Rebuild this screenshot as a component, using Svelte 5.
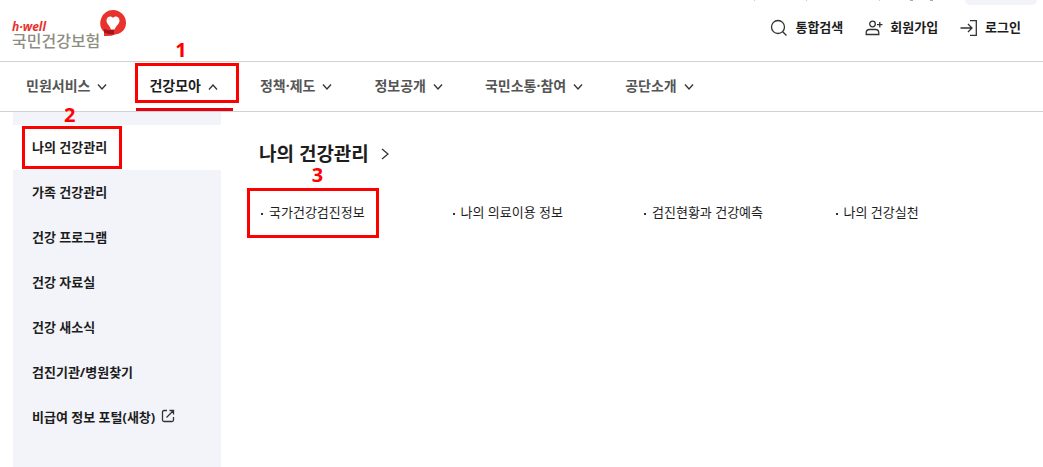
<script>
  const menus = [
    { name: '민원서비스' },
    { name: '건강모아', open: true, mark: '1' },
    { name: '정책·제도' },
    { name: '정보공개' },
    { name: '국민소통·참여' },
    { name: '공단소개' }
  ];
  const sections = [
    { name: '나의 건강관리', current: true, mark: '2' },
    { name: '가족 건강관리' },
    { name: '건강 프로그램' },
    { name: '건강 자료실' },
    { name: '건강 새소식' },
    { name: '검진기관/병원찾기' },
    { name: '비급여 정보 포털(새창)', external: true }
  ];
  const pages = [
    { name: '국가건강검진정보', mark: '3' },
    { name: '나의 의료이용 정보' },
    { name: '검진현황과 건강예측' },
    { name: '나의 건강실천' }
  ];
</script>

<header>
  <div class="utility">
    <span class="cell short"></span><span class="cell"></span><span class="cell long"></span>
    <span class="pill"></span>
  </div>
  <div class="brand-row">
    <a class="logo" href="#home">
      <span class="words"><em>h·well</em><span>국민건강보험</span></span>
      <svg width="28" height="28" viewBox="0 0 28 28" aria-hidden="true">
        <path fill="#e8322d" d="M14 1A13 13 0 0 1 27 14C27 20 23 24.500 16 25.500Q12 27.500 5 27V23A13 13 0 0 1 14 1Z" />
        <path fill="#a5141c" d="M5 20Q9 22 15 20.500V25.500Q10 26 5 23.500Z" />
        <path fill="#fff" d="M14 9C15.500 6.500 20.500 7 20.500 11.500C20.500 15 17.500 16 15.500 20.500H12C10.500 16 7.500 15 7.500 11.500C7.500 7 12.500 6.500 14 9Z" />
      </svg>
    </a>
    <div class="tools">
      <a href="#search">
        <svg width="18" height="18" viewBox="0 0 18 18"><circle cx="8" cy="8" r="6.500" /><path d="M12.700 12.700L16.500 16.500" /></svg>
        통합검색
      </a>
      <a href="#join">
        <svg width="18" height="18" viewBox="0 0 18 18"><circle cx="7.500" cy="5" r="2.800" /><path d="M1.200 15.500V14Q1.200 10.500 4.500 10.500H10.500Q13.800 10.500 13.800 14V15.500ZM14.800 3V8.500M12 5.700H17.500" /></svg>
        회원가입
      </a>
      <a href="#login">
        <svg width="18" height="18" viewBox="0 0 18 18"><path d="M10 1.700H16.300V16.300H10M0.500 9H12M8 5L12 9L8 13" /></svg>
        로그인
      </a>
    </div>
  </div>
  <nav class="main-nav">
    {#each menus as menu}
      <button class:open={menu.open} aria-expanded={!!menu.open}>
        {menu.name}
        <svg width="10" height="8" viewBox="0 0 10 8"><path d={menu.open ? 'M1 6.500L5 2L9 6.500' : 'M1 1.500L5 6L9 1.500'} /></svg>
        {#if menu.mark}<span class="mark"><b>{menu.mark}</b></span>{/if}
      </button>
    {/each}
  </nav>
</header>

<main>
  <aside>
    {#each sections as section}
      <a href="#section" class:current={section.current}>
        {section.name}
        {#if section.external}
          <svg width="14" height="14" viewBox="0 0 14 14"><path d="M6 1.500H3Q1.500 1.500 1.500 3V11Q1.500 12.500 3 12.500H11Q12.500 12.500 12.500 11V8M5.500 8.500L12.500 1.500M8.500 1.500H12.500V5.500" /></svg>
        {/if}
        {#if section.mark}<span class="mark"><b>{section.mark}</b></span>{/if}
      </a>
    {/each}
  </aside>
  <section>
    <h1><a href="#my-health">나의 건강관리
      <svg width="8" height="12" viewBox="0 0 8 12"><path d="M1 1L7 6L1 11" /></svg></a></h1>
    <ul>
      {#each pages as page}
        <li>
          <a href="#page">{page.name}{#if page.mark}<span class="mark"><b>{page.mark}</b></span>{/if}</a>
        </li>
      {/each}
    </ul>
  </section>
</main>

<style>
  :global(body) { background: #fff; }
  header, main { font-family: 'Noto Sans', 'Noto Sans CJK KR', sans-serif; color: #1d1d1d; }
  a { color: inherit; text-decoration: none; }
  svg { fill: none; stroke: #333; stroke-width: 1.3; flex: none; }
  .utility { display: flex; justify-content: flex-end; height: 5px; padding-right: 6px; }
  .cell { box-sizing: border-box; width: 73px; height: 1px; border-left: 1px solid #ccc; }
  .cell.short { width: 52px; }
  .cell.long { width: 86px; background: linear-gradient(#aaa, #aaa) 30px 0 / 3px 1px no-repeat, linear-gradient(#aaa, #aaa) 50px 0 / 3px 1px no-repeat; }
  .pill { width: 72px; border-radius: 0 0 6px 6px; background: #f3f4fa; }
  .brand-row { display: flex; justify-content: space-between; height: 56px; padding: 0 22px 0 12px; }
  .logo { display: flex; align-items: flex-start; padding-top: 4px; }
  .logo svg { margin-left: -1px; stroke: none; }
  .words { display: flex; flex-direction: column; padding-top: 12px; font-size: 16px; font-weight: 500; line-height: 14px; color: #8d8d82; }
  .words span { font-family: 'Noto Sans CJK KR', sans-serif; }
  .words em { font: italic bold 12px/12px 'Noto Sans', sans-serif; color: #e8322d; }
  .tools { display: flex; gap: 22px; height: 44px; font-size: 13px; font-weight: 700; }
  .tools a { display: flex; align-items: center; gap: 7px; padding-bottom: 2px; }
  .tools svg { margin-top: 3px; }
  .main-nav { display: flex; gap: 14px; height: 49px; padding-left: 13px; border: 1px solid #d2d2d2; border-width: 1px 0; }
  button { position: relative; display: flex; align-items: center; gap: 7px; padding: 0 15px 2px 13px; border: 0; background: none; font: 700 14px/20px 'Noto Sans', 'Noto Sans CJK KR', sans-serif; color: #555; }
  button svg { margin-top: 3px; }
  button.open { color: #1d1d1d; box-shadow: inset 0 -3px #e50012; }
  .mark { position: absolute; border: 3px solid #f00; pointer-events: none; }
  .mark b { position: absolute; left: 50%; font: 700 20px/20px 'Noto Sans', sans-serif; color: #f00; }
  button .mark { inset: 1px -6px 8px -1px; }
  button .mark b { top: -26px; margin-left: -12px; }
  main { display: flex; padding-left: 13px; }
  aside { width: 208px; padding: 13px 0 27px; background: #f3f4fa; }
  aside a { position: relative; box-sizing: border-box; display: flex; align-items: center; gap: 6px; height: 45px; padding: 0 0 3px 19px; font-size: 13px; font-weight: 700; }
  aside .current { background: #fff; }
  aside .mark { inset: 1px 99px 1px 9px; }
  aside .mark b { top: -24px; margin-left: -8px; }
  section { flex: 1; padding: 27px 18px 0 38px; }
  h1 { margin: 0; font-size: 19px; line-height: 30px; font-weight: 700; }
  h1 a { display: flex; align-items: center; gap: 12px; }
  ul { display: grid; grid-template-columns: repeat(4, 1fr); margin: 32px 0 0; padding: 0; list-style: none; }
  li { display: flex; align-items: center; gap: 6px; padding-left: 2px; font-size: 13px; line-height: 22px; }
  li::before { content: ''; width: 2px; height: 2px; margin-top: 3px; background: #333; }
  li a { position: relative; }
  li .mark { inset: -13px -14px -15px -22px; }
  li .mark b { top: -26px; margin-left: -1px; }
</style>
